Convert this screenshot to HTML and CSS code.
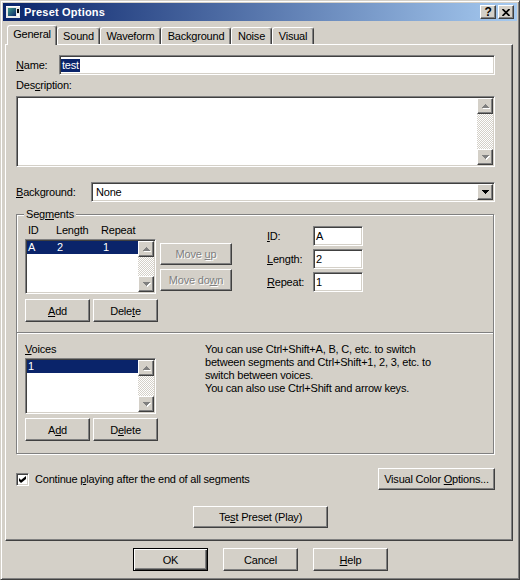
FILE: index.html
```html
<!DOCTYPE html>
<html lang="en">
<head>
    <meta charset="UTF-8">
    <title>Preset Options</title>
    <link rel="stylesheet" href="styles.css">
</head>
<body>
    <div class="dialog">
        <div class="titlebar">
            <svg class="app-icon" width="16" height="16" viewBox="0 0 16 16">
                <defs>
                    <linearGradient id="screen" x1="0" y1="0" x2="1" y2="1">
                        <stop offset="0" stop-color="#3f9a86"/>
                        <stop offset="1" stop-color="#0a246a"/>
                    </linearGradient>
                </defs>
                <rect x="1" y="2" width="14" height="12" fill="#e8e8e8"/>
                <rect x="1" y="2" width="14" height="1" fill="#fff"/>
                <rect x="3" y="4" width="8" height="8" fill="url(#screen)"/>
                <rect x="12" y="5" width="2" height="4" fill="#000"/>
                <rect x="12" y="10" width="2" height="2" fill="#fff"/>
            </svg>
            <span class="title">Preset Options</span>
            <div class="caption-buttons">
                <button class="caption-btn help-btn">?</button>
                <button class="caption-btn close-btn">
                    <svg width="8" height="7" viewBox="0 0 8 7"><path d="M0.5 0l7 7M7.5 0l-7 7" stroke="#000" stroke-width="1.7"/></svg>
                </button>
            </div>
        </div>

        <div class="tabstrip">
            <div class="tab active" style="width:50px">General</div>
            <div class="tab" style="width:43px">Sound</div>
            <div class="tab" style="width:61px">Waveform</div>
            <div class="tab" style="width:70px">Background</div>
            <div class="tab" style="width:41px">Noise</div>
            <div class="tab" style="width:42px">Visual</div>
        </div>

        <div class="panel">
            <div class="name-row">
                <label class="name-lbl"><u>N</u>ame:</label>
                <div class="field name-field"><span class="sel">test</span></div>
            </div>

            <div class="desc-lbl">Des<u>c</u>ription:</div>
            <div class="field textarea">
                <div class="vscroll">
                    <span class="sb-btn"><svg class="arrow dim" width="7" height="4" viewBox="0 0 7 4"><path d="M3 0h1v1h1v1h1v1h1v1H0V3h1V2h1V1h1z"/></svg></span>
                    <span class="sb-track"></span>
                    <span class="sb-btn"><svg class="arrow dim" width="7" height="4" viewBox="0 0 7 4"><path d="M0 0h7v1H6v1H5v1H4v1H3V3H2V2H1V1H0z"/></svg></span>
                </div>
            </div>

            <div class="bg-row">
                <label class="bg-lbl"><u>B</u>ackground:</label>
                <div class="field combo">
                    <span class="combo-text">None</span>
                    <span class="sb-btn combo-btn"><svg class="arrow" width="7" height="4" viewBox="0 0 7 4"><path d="M0 0h7v1H6v1H5v1H4v1H3V3H2V2H1V1H0z"/></svg></span>
                </div>
            </div>

            <div class="group">
                <span class="group-title">Seg<u>m</u>ents</span>

                <div class="seg">
                    <div class="seg-left">
                        <div class="cols">
                            <span class="col-id">ID</span>
                            <span class="col-len">Length</span>
                            <span>Repeat</span>
                        </div>
                        <div class="list-wrap">
                            <div class="field list seg-list">
                                <div class="items">
                                    <div class="item selected">
                                        <span class="col-id">A</span>
                                        <span class="col-len">2</span>
                                        <span>1</span>
                                    </div>
                                </div>
                                <div class="vscroll">
                                    <span class="sb-btn"><svg class="arrow dim" width="7" height="4" viewBox="0 0 7 4"><path d="M3 0h1v1h1v1h1v1h1v1H0V3h1V2h1V1h1z"/></svg></span>
                                    <span class="sb-track"></span>
                                    <span class="sb-btn"><svg class="arrow dim" width="7" height="4" viewBox="0 0 7 4"><path d="M0 0h7v1H6v1H5v1H4v1H3V3H2V2H1V1H0z"/></svg></span>
                                </div>
                            </div>
                            <div class="move-col">
                                <button class="btn move-btn" disabled>Move <u>u</u>p</button>
                                <button class="btn move-btn" disabled>Move do<u>w</u>n</button>
                            </div>
                        </div>
                        <div class="btn-row">
                            <button class="btn small-btn"><u>A</u>dd</button>
                            <button class="btn small-btn">Dele<u>t</u>e</button>
                        </div>
                    </div>

                    <div class="seg-fields">
                        <label><u>I</u>D:</label>
                        <div class="field edit">A</div>
                        <label><u>L</u>ength:</label>
                        <div class="field edit">2</div>
                        <label><u>R</u>epeat:</label>
                        <div class="field edit">1</div>
                    </div>
                </div>

                <div class="divider"></div>

                <div class="voices">
                    <div class="voices-left">
                        <div class="voices-lbl"><u>V</u>oices</div>
                        <div class="field list voice-list">
                            <div class="items">
                                <div class="item selected"><span>1</span></div>
                            </div>
                            <div class="vscroll">
                                <span class="sb-btn"><svg class="arrow dim" width="7" height="4" viewBox="0 0 7 4"><path d="M3 0h1v1h1v1h1v1h1v1H0V3h1V2h1V1h1z"/></svg></span>
                                <span class="sb-track"></span>
                                <span class="sb-btn"><svg class="arrow dim" width="7" height="4" viewBox="0 0 7 4"><path d="M0 0h7v1H6v1H5v1H4v1H3V3H2V2H1V1H0z"/></svg></span>
                            </div>
                        </div>
                        <div class="btn-row voice-btns">
                            <button class="btn small-btn">A<u>d</u>d</button>
                            <button class="btn small-btn">D<u>e</u>lete</button>
                        </div>
                    </div>
                    <p class="help">
                        You can use Ctrl+Shift+A, B, C, etc. to switch<br>
                        between segments and Ctrl+Shift+1, 2, 3, etc. to<br>
                        switch between voices.<br>
                        You can also use Ctrl+Shift and arrow keys.
                    </p>
                </div>
            </div>

            <div class="options-row">
                <span class="field check">
                    <svg width="7" height="7" viewBox="0 0 7 7"><path d="M0 2l2 2 5-4v3L2 7 0 5z"/></svg>
                </span>
                <span class="check-lbl">Continue <u>p</u>laying after the end of all segments</span>
                <button class="btn color-btn">Visual Color <u>O</u>ptions...</button>
            </div>

            <div class="test-row">
                <button class="btn test-btn">Te<u>s</u>t Preset (Play)</button>
            </div>
        </div>

        <div class="footer">
            <button class="btn footer-btn default">OK</button>
            <button class="btn footer-btn">Cancel</button>
            <button class="btn footer-btn"><u>H</u>elp</button>
        </div>
    </div>
</body>
</html>
```

FILE: styles.css
```css
/* Classic Windows dialog palette */
body {
    margin: 0;
    background: #d4d0c8;
    font-family: "Liberation Sans", Arial, sans-serif;
    font-size: 11px;
    letter-spacing: -0.2px;
    color: #000;
}

label {
    display: flex;
    align-items: center;
}

/* Window frame */
.dialog {
    box-sizing: border-box;
    width: 520px;
    height: 580px;
    padding: 2px;
    background: #d4d0c8;
    border: 1px solid;
    border-color: #d4d0c8 #404040 #404040 #d4d0c8;
    box-shadow: inset 1px 1px #fff, inset -1px -1px #808080;
}

.titlebar {
    display: flex;
    align-items: center;
    height: 18px;
    padding: 0 3px 0 2px;
    background: linear-gradient(to right, #0a246a, #a6caf0);
    color: #fff;
}

.title {
    margin-left: 3px;
    font-weight: bold;
    letter-spacing: 0.2px;
}

.caption-buttons {
    display: flex;
    gap: 2px;
    margin-left: auto;
}

/* Buttons */
button {
    font: inherit;
    letter-spacing: inherit;
    color: inherit;
    margin: 0;
    padding: 0;
    background: #d4d0c8;
}

.btn, .caption-btn, .sb-btn {
    box-sizing: border-box;
    background: #d4d0c8;
    border: 1px solid;
    border-color: #fff #404040 #404040 #fff;
    box-shadow: inset -1px -1px #808080;
}

.btn:disabled {
    color: #808080;
    text-shadow: 1px 1px #fff;
}

.caption-btn {
    display: flex;
    align-items: center;
    justify-content: center;
    width: 16px;
    height: 14px;
    color: #000;
    font-weight: bold;
    line-height: 12px;
}

.help-btn {
    font-size: 12px;
}

/* Tabs */
.tabstrip {
    display: flex;
    align-items: flex-end;
    height: 23px;
    padding-left: 4px;
}

.tab {
    box-sizing: border-box;
    height: 17px;
    padding-top: 1px;
    border: 1px solid;
    border-bottom: 0;
    border-color: #fff #404040 #404040 #fff;
    border-radius: 3px 3px 0 0;
    box-shadow: inset -1px 0 #808080;
    text-align: center;
    line-height: 15px;
}

.tab.active {
    position: relative;
    z-index: 1;
    height: 20px;
    margin-bottom: -1px;
    padding-top: 0;
    line-height: 17px;
    background: #d4d0c8;
}

.panel {
    box-sizing: border-box;
    width: 508px;
    height: 497px;
    margin-left: 2px;
    padding: 10px 17px 0 10px;
    border: 1px solid;
    border-color: #fff #404040 #404040 #fff;
    box-shadow: inset -1px -1px #808080;
}

/* Sunken fields */
.field {
    box-sizing: border-box;
    background: #fff;
    border: 1px solid;
    border-color: #808080 #fff #fff #808080;
    box-shadow: inset 1px 1px #404040, inset -1px -1px #d4d0c8;
}

.name-row {
    display: flex;
    height: 20px;
}

.name-lbl {
    width: 43px;
}

.name-field {
    flex: 1;
    display: flex;
    align-items: center;
    padding-left: 1px;
}

.sel {
    padding: 0 1px;
    line-height: 13px;
    background: #0a246a;
    color: #fff;
}

.desc-lbl {
    margin-top: 4px;
    line-height: 13px;
}

.textarea {
    display: flex;
    justify-content: flex-end;
    height: 71px;
    margin-top: 4px;
    padding: 1px;
}

/* Scrollbars */
.vscroll {
    display: flex;
    flex-direction: column;
    width: 16px;
}

.sb-btn {
    display: flex;
    align-items: center;
    justify-content: center;
    width: 16px;
    height: 16px;
}

.sb-track {
    flex: 1;
    background: repeating-conic-gradient(#fff 0 25%, #d4d0c8 0 50%) 0 0 / 2px 2px;
}

.arrow {
    fill: #000;
}

.arrow.dim {
    fill: #808080;
    filter: drop-shadow(1px 1px 0 #fff);
}

.bg-row {
    display: flex;
    height: 20px;
    margin-top: 15px;
}

.bg-lbl {
    width: 75px;
}

.combo {
    flex: 1;
    display: flex;
    align-items: center;
    padding: 1px;
}

.combo-text {
    flex: 1;
    padding-left: 3px;
}

/* Group boxes */
.group {
    margin: 12px 1px 0 0;
    padding-bottom: 12px;
    border: 1px solid #808080;
    box-shadow: inset 1px 1px #fff, 1px 1px #fff;
}

.group-title {
    display: block;
    width: fit-content;
    margin: -7px 0 0 7px;
    padding: 0 2px;
    line-height: 13px;
    background: #d4d0c8;
}

.seg {
    display: flex;
    padding-left: 8px;
}

.seg-left {
    width: 207px;
}

.cols {
    display: flex;
    margin-top: 3px;
    padding-left: 3px;
    line-height: 13px;
}

.col-id {
    width: 28px;
}

.col-len {
    width: 45px;
}

.list-wrap {
    display: flex;
    margin-top: 2px;
}

.list {
    display: flex;
    width: 131px;
    padding: 1px;
}

.seg-list {
    height: 55px;
}

.items {
    flex: 1;
}

.item {
    display: flex;
    height: 13px;
    padding-left: 1px;
    line-height: 13px;
}

.item .col-id {
    width: 29px;
}

.item .col-len {
    width: 46px;
}

.item.selected {
    background: #0a246a;
    color: #fff;
}

.move-col {
    display: flex;
    flex-direction: column;
    gap: 4px;
    margin-left: 4px;
    padding-top: 4px;
}

.move-btn {
    width: 72px;
    height: 22px;
}

.btn-row {
    display: flex;
    gap: 3px;
    margin-top: 5px;
}

.small-btn {
    width: 65px;
    height: 23px;
}

.seg-fields {
    display: grid;
    grid-template-columns: 46px 50px;
    grid-auto-rows: 20px;
    row-gap: 3px;
    margin: 5px 0 0 35px;
}

.edit {
    display: flex;
    align-items: center;
    padding-left: 2px;
}

.divider {
    margin-top: 10px;
    border-top: 1px solid #808080;
    border-bottom: 1px solid #fff;
}

.voices {
    display: flex;
    padding-left: 8px;
}

.voices-left {
    width: 133px;
}

.voices-lbl {
    margin-top: 9px;
    line-height: 13px;
}

.voice-list {
    height: 56px;
    margin-top: 2px;
}

.voice-btns {
    margin-top: 4px;
}

.help {
    margin: 9px 0 0 47px;
    line-height: 13px;
}

/* Bottom of the General page */
.options-row {
    display: flex;
    align-items: center;
    height: 22px;
    margin-top: 14px;
}

.check {
    display: flex;
    align-items: center;
    justify-content: center;
    width: 13px;
    height: 13px;
}

.check-lbl {
    margin-left: 6px;
}

.color-btn {
    width: 117px;
    height: 22px;
    margin-left: auto;
}

.test-row {
    margin-top: 16px;
}

.test-btn {
    width: 135px;
    height: 22px;
    margin-left: 177px;
}

.footer {
    display: flex;
    gap: 15px;
    margin-top: 7px;
    padding-left: 130px;
}

.footer-btn {
    width: 75px;
    height: 23px;
}

.footer-btn.default {
    border-color: #000;
    box-shadow: inset 1px 1px #fff, inset -1px -1px #404040, inset -2px -2px #808080;
}
```
